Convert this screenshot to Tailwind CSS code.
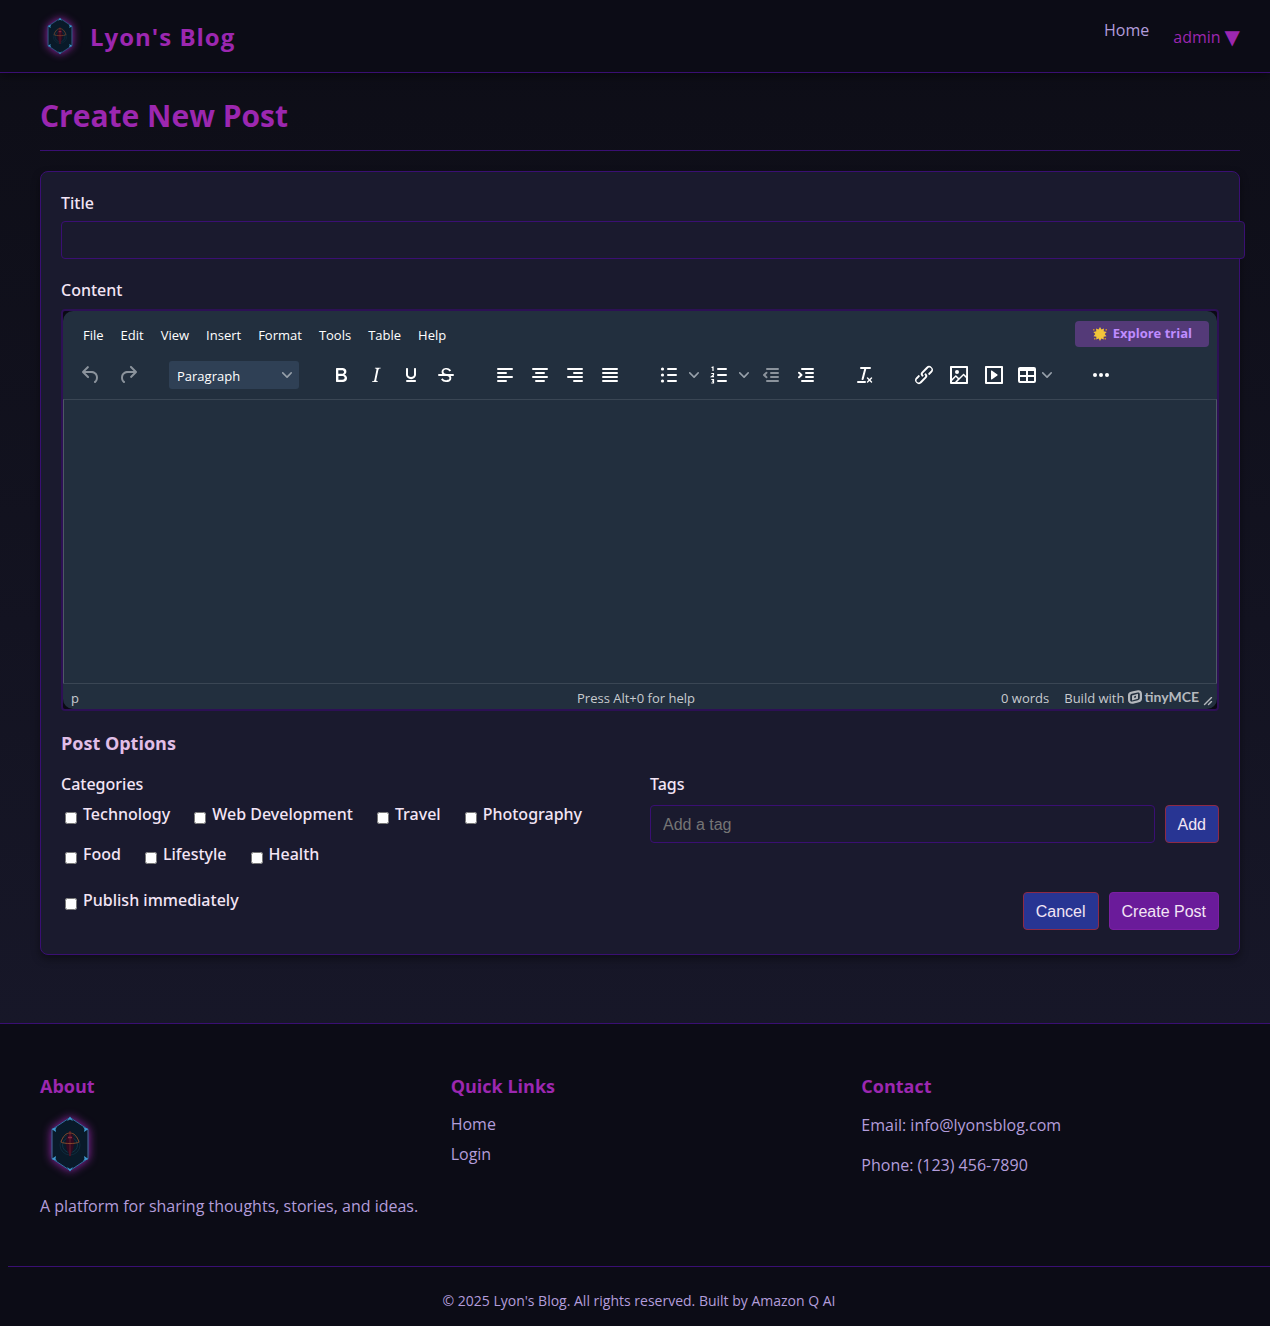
<!DOCTYPE html>
<html lang="en">
<head>
<meta charset="utf-8">
<meta name="viewport" content="width=device-width, initial-scale=1">
<title>Create New Post - Lyon's Blog</title>
<script src="https://cdn.jsdelivr.net/npm/@tailwindcss/browser@4"></script>
</head>
<body class="min-h-screen flex flex-col overflow-x-hidden bg-linear-to-b from-[#0d0d16] to-[#1a1a2e] font-['Open_Sans','Noto_Sans',sans-serif] text-base text-[#f3e5f5]">

<svg class="hidden" aria-hidden="true">
  <symbol id="crest" viewBox="0 0 60 60">
    <path d="M30 3.500 48 15.500V44.500L30 56.500 12 44.500V15.500Z" fill="#091a29" stroke="#2c6f9c" stroke-width="1"/>
    <path d="M12.500 16V44M47.500 16V44" stroke="#2a4363" stroke-width="1"/>
    <g fill="#3f97cf">
      <path d="M30 2.500 33 7 30 5.500 27 7ZM30 57.500 33 53 30 55 27 53Z"/>
      <path d="M11.500 15 17 13 15.500 15 16 18ZM48.500 15 43 13 44.500 15 44 18ZM11.500 45 16 42 15.500 45 17 47ZM48.500 45 44 42 44.500 45 43 47Z"/>
    </g>
    <g fill="none" stroke="#0f2a3c"><circle cx="30" cy="31" r="10"/><circle cx="30" cy="31" r="7.500" stroke="#123246"/></g>
    <path d="M30 17c5 5 5 16 1.500 22L30 43l-1.500-4C25 33 25 22 30 17Z" fill="#320a20"/>
    <path d="M30 17V42" stroke="#551828" stroke-width="1.500"/>
    <path d="M21 28c2-6 5-9 9-9s7 3 9 9M21 28c3 2 15 2 18 0" fill="none" stroke="#85482a" stroke-width="1"/>
    <path d="M28 23.500h4" stroke="#8a2c40" stroke-width="1.500"/>
  </symbol>
  <symbol id="chev" viewBox="0 0 10 10"><path d="M8.700 2.200c.3-.3.8-.3 1 0 .4.4.4.9 0 1.200L5.700 7.800c-.3.3-.9.3-1.200 0L.2 3.400a.8.8 0 0 1 0-1.200c.3-.3.8-.3 1.100 0L5 6l3.700-3.800Z"/></symbol>
</svg>

<header class="relative flex h-[73px] items-center justify-between border-b border-[#3a0f73] bg-[#0c0c16] pl-10 pr-[30px] shadow-[0_2px_10px_rgba(0,0,0,0.5)]">
  <a href="#" class="flex items-center gap-[10px]">
    <svg class="size-10 drop-shadow-[0_0_4px_#9c27b0]" role="img" aria-label="Crest"><use href="#crest"/></svg>
    <span class="pt-[2px] text-2xl font-bold tracking-[1px] text-[#9c27b0]">Lyon's Blog</span>
  </a>
  <nav class="flex items-start gap-6">
    <a href="#" class="leading-6 pb-3 text-[#b39ddb]">Home</a>
    <button type="button" class="flex items-center gap-1 pt-[7px] leading-6 text-[#9c27b0]">admin <span class="font-['DejaVu_Sans',sans-serif] text-xl leading-6">▼</span></button>
  </nav>
</header>

<main class="mb-[68px] pl-10 pr-[30px]">
  <h1 class="mb-5 border-b border-[#3a0f73] pt-5 pb-[11px] text-3xl leading-[46px] font-bold text-[#9c27b0]">Create New Post</h1>

  <form class="rounded-lg border border-[#3a0f73] bg-[#1a1a2e] p-5 pb-6 shadow-[0_4px_8px_rgba(0,0,0,0.4)]">
    <label for="title" class="mb-[7px] block font-['Noto_Sans',sans-serif] leading-[22px] font-medium">Title</label>
    <input id="title" type="text" class="mb-5 block box-content h-[22px] w-full rounded border border-[#3a0f73] bg-[#1a1a2e] px-3 py-[7px] font-['Liberation_Sans',Arial,sans-serif]">

    <label for="content" class="mb-2 block font-['Noto_Sans',sans-serif] leading-[22px] font-medium">Content</label>
    <div class="mb-5 rounded border-2 border-[#2d1055] bg-[#0a0a14] text-[13px]">
      <div class="overflow-hidden rounded-[10px] bg-[#222f3e] text-white">
        <div class="flex h-[47px] items-center justify-between pt-[2px] pl-5 pr-2">
          <div class="flex gap-[17px]">
            <button type="button">File</button><button type="button">Edit</button><button type="button">View</button><button type="button">Insert</button><button type="button">Format</button><button type="button">Tools</button><button type="button">Table</button><button type="button">Help</button>
          </div>
          <button type="button" class="mb-1 flex h-[26px] items-center gap-[5px] rounded bg-[#543a78] px-[17px] pt-px font-bold text-[#bf8cff]">
            <svg class="size-4" viewBox="0 0 16 16" fill="#f2c43a"><path d="m8 1 1.500 2.600L12 2.500l-.3 2.800 3 .7-2 2 1.800 2.300-2.900.4.200 2.800-2.500-1.100L8 15l-1.300-2.600-2.500 1.100.2-2.800-2.900-.4L3.300 8l-2-2 3-.7L4 2.500l2.500 1.100Z"/><path d="M1 3h1.500v1.500H1ZM13.500 3H15v1.500h-1.500ZM2 12h1.500v1.500H2ZM12.500 12H14v1.500h-1.500Z" fill="#c98f2d"/></svg>
            <span>Explore trial</span>
          </button>
        </div>

        <div class="flex h-[41px] items-start gap-6 overflow-hidden pl-[10px]">
          <div class="-mr-px flex h-[34px] items-center gap-px text-[#8b939c]">
            <button type="button" aria-label="Undo" class="flex h-7 w-9 items-center justify-center"><svg class="size-6 fill-current" viewBox="0 0 24 24"><path d="M6.400 8H12c3.700 0 6.200 2 6.800 5.100.6 2.700-.4 5.600-2.300 6.800a1 1 0 0 1-1-1.800c1.100-.6 1.800-2.700 1.400-4.600-.5-2.100-2.100-3.500-4.900-3.500H6.400l3.300 3.300a1 1 0 1 1-1.400 1.400l-5-5a1 1 0 0 1 0-1.400l5-5a1 1 0 0 1 1.400 1.400L6.400 8Z"/></svg></button>
            <button type="button" aria-label="Redo" class="flex h-7 w-9 items-center justify-center"><svg class="size-6 fill-current" viewBox="0 0 24 24"><path d="M17.600 10H12c-2.800 0-4.400 1.400-4.900 3.500-.4 2 .3 4 1.400 4.600a1 1 0 1 1-1 1.800c-2-1.200-2.900-4.100-2.300-6.800.6-3 3-5.100 6.800-5.100h5.600l-3.300-3.300a1 1 0 1 1 1.400-1.400l5 5a1 1 0 0 1 0 1.400l-5 5a1 1 0 0 1-1.400-1.400l3.300-3.300Z"/></svg></button>
          </div>
          <div class="relative flex h-[34px] w-[130px] items-center">
            <select aria-label="Block format" class="h-7 w-full appearance-none rounded-[3px] bg-[#2f4055] px-2 pt-[3px] text-white"><option>Paragraph</option></select>
            <svg class="pointer-events-none absolute right-[7px] top-3 size-[10px] fill-[#97a0aa]"><use href="#chev"/></svg>
          </div>
          <div class="flex h-[34px] items-center">
            <button type="button" aria-label="Bold" class="flex h-7 w-[35px] items-center justify-center"><svg class="size-6 fill-current" viewBox="0 0 24 24"><path d="M7.800 19c-.3 0-.5 0-.6-.2l-.2-.5V5.700c0-.2 0-.4.2-.5l.6-.2h5c1.500 0 2.700.3 3.500 1 .7.6 1.100 1.400 1.100 2.500a3 3 0 0 1-.6 1.900c-.4.6-1 1-1.600 1.200.4.1.9.3 1.300.6s.8.7 1 1.200c.4.4.5 1 .5 1.600 0 1.300-.4 2.300-1.300 3-.8.7-2.100 1-3.800 1H7.800Zm5-8.300c.6 0 1.200-.1 1.600-.5.4-.3.6-.7.6-1.300 0-1.100-.8-1.700-2.300-1.700H9.300v3.500h3.400Zm.5 6c.7 0 1.300-.1 1.700-.4.4-.4.6-.9.6-1.500s-.2-1-.7-1.400c-.4-.3-1-.4-2-.4H9.400v3.800h4Z" fill-rule="evenodd"/></svg></button>
            <button type="button" aria-label="Italic" class="flex h-7 w-[35px] items-center justify-center"><svg class="size-6 fill-current" viewBox="0 0 24 24"><path d="m16.700 4.700-.1.900h-.3c-.6 0-1 0-1.400.3-.3.3-.4.6-.5 1.100l-2.100 9.800v.6c0 .5.4.8 1.400.8h.2l-.2.8H8l.2-.8h.2c1.100 0 1.800-.5 2-1.500l2-9.800.1-.5c0-.6-.4-.8-1.400-.8h-.3l.2-.9h5.800Z"/></svg></button>
            <button type="button" aria-label="Underline" class="flex h-7 w-[35px] items-center justify-center"><svg class="size-6 fill-current" viewBox="0 0 24 24"><path d="M16 5c.6 0 1 .4 1 1v5.500a4 4 0 0 1-.4 1.800l-1 1.400a5.300 5.300 0 0 1-5.500 1 5 5 0 0 1-1.600-1c-.5-.4-.8-.9-1.100-1.400a4 4 0 0 1-.4-1.800V6c0-.6.4-1 1-1s1 .4 1 1v5.500c0 .3 0 .6.200 1l.6.7a3.300 3.300 0 0 0 2.200.8 3.400 3.400 0 0 0 2.200-.8c.3-.2.4-.5.6-.8l.2-.9V6c0-.6.4-1 1-1ZM8 17h8c.6 0 1 .4 1 1s-.4 1-1 1H8a1 1 0 0 1 0-2Z"/></svg></button>
            <button type="button" aria-label="Strikethrough" class="flex h-7 w-[35px] items-center justify-center"><svg class="size-6 fill-current" viewBox="0 0 24 24"><path d="M15.600 8.500c-.5-.7-1-1.100-1.300-1.300-.6-.4-1.300-.6-2-.6-2.700 0-2.800 1.700-2.800 2.100 0 1.600 1.800 2 3.200 2.300 4.400.9 4.600 2.800 4.600 3.900 0 1.400-.7 4.100-5 4.100A6.200 6.200 0 0 1 7 16.400l1.500-1.100c.4.6 1.600 2 3.700 2 1.600 0 2.500-.4 3-1.200.4-.8.3-2-.8-2.600-.7-.4-1.600-.7-2.900-1-1-.2-3.900-.8-3.900-3.600C7.600 6 10.300 5 12.400 5c2.900 0 4.200 1.600 4.700 2.400l-1.500 1.100Z"/><path d="M5 11h14a1 1 0 0 1 0 2H5a1 1 0 0 1 0-2Z"/></svg></button>
          </div>
          <div class="flex h-[34px] items-center">
            <button type="button" aria-label="Align left" class="flex h-7 w-[35px] items-center justify-center"><svg class="size-6 fill-none stroke-current stroke-2" stroke-linecap="round" viewBox="0 0 24 24"><path d="M5 6h14M5 10h8M5 14h14M5 18h8"/></svg></button>
            <button type="button" aria-label="Align center" class="flex h-7 w-[35px] items-center justify-center"><svg class="size-6 fill-none stroke-current stroke-2" stroke-linecap="round" viewBox="0 0 24 24"><path d="M5 6h14M8 10h8M5 14h14M8 18h8"/></svg></button>
            <button type="button" aria-label="Align right" class="flex h-7 w-[35px] items-center justify-center"><svg class="size-6 fill-none stroke-current stroke-2" stroke-linecap="round" viewBox="0 0 24 24"><path d="M5 6h14M11 10h8M5 14h14M11 18h8"/></svg></button>
            <button type="button" aria-label="Justify" class="flex h-7 w-[35px] items-center justify-center"><svg class="size-6 fill-none stroke-current stroke-2" stroke-linecap="round" viewBox="0 0 24 24"><path d="M5 6h14M5 10h14M5 14h14M5 18h14"/></svg></button>
          </div>
          <div class="flex h-[34px] items-center">
            <button type="button" aria-label="Bullet list" class="flex h-7 w-[35px] items-center justify-center"><svg class="size-6 fill-current" viewBox="0 0 24 24"><path d="M11 6h8M11 12h8M11 18h8" fill="none" stroke="currentColor" stroke-width="2" stroke-linecap="round"/><circle cx="5.500" cy="6" r="1.600"/><circle cx="5.500" cy="12" r="1.600"/><circle cx="5.500" cy="18" r="1.600"/></svg></button>
            <button type="button" aria-label="Bullet styles" class="flex h-7 w-[15px] items-center justify-center"><svg class="size-[10px] fill-[#97a0aa]"><use href="#chev"/></svg></button>
            <button type="button" aria-label="Numbered list" class="flex h-7 w-[35px] items-center justify-center"><svg class="size-6 fill-none stroke-current" viewBox="0 0 24 24"><path d="M11 6h8M11 12h8M11 18h8" stroke-width="2" stroke-linecap="round"/><path d="M4.500 4.500 6 4v4M4.300 10.500h2.200V12L4.500 13.700H7M4.300 16.500h2.200V20H4.300M5 18.200h1.500" stroke-width="1.200"/></svg></button>
            <button type="button" aria-label="Number styles" class="flex h-7 w-[15px] items-center justify-center"><svg class="size-[10px] fill-[#97a0aa]"><use href="#chev"/></svg></button>
            <button type="button" aria-label="Decrease indent" class="ml-[2px] flex h-7 w-[35px] items-center justify-center text-[#8b939c]"><svg class="size-6 fill-none stroke-current stroke-2" stroke-linecap="round" stroke-linejoin="round" viewBox="0 0 24 24"><path d="M8 6h11M12 10h7M12 14h7M8 18h11M7.500 9.700 5 12l2.500 2.300"/></svg></button>
            <button type="button" aria-label="Increase indent" class="flex h-7 w-[35px] items-center justify-center"><svg class="size-6 fill-none stroke-current stroke-2" stroke-linecap="round" stroke-linejoin="round" viewBox="0 0 24 24"><path d="M8 6h11M12 10h7M12 14h7M8 18h11M5 9.700 7.500 12 5 14.300"/></svg></button>
          </div>
          <div class="flex h-[34px] items-center">
            <button type="button" aria-label="Clear formatting" class="flex h-7 w-[35px] items-center justify-center"><svg class="size-6 fill-current" viewBox="0 0 24 24"><path d="M13.200 6a1 1 0 0 1 0 .2l-2.600 10a1 1 0 0 1-1 .8h-.2a.8.8 0 0 1-.8-1l2.600-10H8a1 1 0 1 1 0-2h9a1 1 0 0 1 0 2h-3.800ZM5 18h7a1 1 0 0 1 0 2H5a1 1 0 0 1 0-2Zm13 1.500L16.500 18 15 19.500a.7.7 0 0 1-1-1l1.500-1.500-1.500-1.500a.7.7 0 0 1 1-1l1.500 1.500 1.500-1.500a.7.7 0 0 1 1 1L17.500 17l1.500 1.500a.7.7 0 0 1-1 1Z"/></svg></button>
          </div>
          <div class="flex h-[34px] items-center">
            <button type="button" aria-label="Link" class="flex h-7 w-[35px] items-center justify-center"><svg class="size-6 fill-current" viewBox="0 0 24 24"><path d="M6.200 12.300a1 1 0 0 1 1.400 1.400l-2 2a2 2 0 1 0 2.600 2.800l4.800-4.800a1 1 0 0 0 0-1.400 1 1 0 1 1 1.400-1.300 2.900 2.900 0 0 1 0 4L9.600 20a3.900 3.900 0 0 1-5.500-5.500l2-2Zm11.600-.6a1 1 0 0 1-1.400-1.400l2-2a2 2 0 1 0-2.600-2.800L11 10.300a1 1 0 0 0 0 1.400A1 1 0 1 1 9.600 13a2.900 2.900 0 0 1 0-4L14.400 4a3.900 3.900 0 0 1 5.500 5.500l-2 2Z"/></svg></button>
            <button type="button" aria-label="Image" class="flex h-7 w-[35px] items-center justify-center"><svg class="size-6 fill-current" viewBox="0 0 24 24"><path fill-rule="evenodd" d="m5 15.700 3.300-3.200c.3-.3.7-.3 1 0L12 15l4.100-4c.3-.4.8-.4 1 0l2 1.900V5H5v10.700ZM5 18V19h3l2.800-2.900-2-2L5 17.900Zm14-3-2.500-2.400-6.400 6.500H19v-4ZM4 3h16c.6 0 1 .4 1 1v16c0 .6-.4 1-1 1H4a1 1 0 0 1-1-1V4c0-.6.4-1 1-1Z"/><circle cx="10" cy="9" r="2"/></svg></button>
            <button type="button" aria-label="Media" class="flex h-7 w-[35px] items-center justify-center"><svg class="size-6 fill-current" viewBox="0 0 24 24"><path fill-rule="evenodd" d="M4 3h16c.6 0 1 .4 1 1v16c0 .6-.4 1-1 1H4a1 1 0 0 1-1-1V4c0-.6.4-1 1-1Zm1 2v14h14V5H5Zm4.800 2.600 5.600 4a.5.5 0 0 1 0 .8l-5.600 4A.5.5 0 0 1 9 16V8a.5.5 0 0 1 .8-.4Z"/></svg></button>
            <button type="button" aria-label="Table" class="flex h-7 w-12 items-center gap-[3px] pl-1"><svg class="size-6 fill-current" viewBox="0 0 24 24"><path fill-rule="evenodd" d="M19 4a2 2 0 0 1 2 2v12a2 2 0 0 1-2 2H5a2 2 0 0 1-2-2V6c0-1.100.9-2 2-2h14ZM5 14v4h6v-4H5Zm14 0h-6v4h6v-4Zm0-6h-6v4h6V8ZM5 12h6V8H5v4Z"/></svg><svg class="size-[10px] fill-[#97a0aa]"><use href="#chev"/></svg></button>
          </div>
          <div class="flex h-[34px] items-center">
            <button type="button" aria-label="More" class="flex h-7 w-[35px] items-center justify-center"><svg class="size-6 fill-current" viewBox="0 0 24 24"><circle cx="6" cy="12" r="2"/><circle cx="12" cy="12" r="2"/><circle cx="18" cy="12" r="2"/></svg></button>
          </div>
        </div>

        <textarea id="content" class="block h-[284px] w-full resize-none border border-b-0 border-[#4d5864] border-t-[#3a4654] bg-[#222f3e] p-4 text-base text-white"></textarea>

        <div class="grid h-[26px] grid-cols-3 items-center border-t border-[#3a4654] pt-1 pl-2 pr-1 text-[#c8cbcf]">
          <span>p</span>
          <span class="pr-3 text-center">Press Alt+0 for help</span>
          <div class="flex items-center justify-end">
            <span class="mr-[15px]">0 words</span>
            <a href="#" class="flex items-center gap-1">Build with
              <span class="flex items-center gap-[2px] pb-1 font-['Lato',sans-serif] text-sm leading-4 font-bold text-[#b4b8bd]">
                <svg class="size-[14px]" viewBox="0 0 14 14"><path fill="#b4b8bd" fill-rule="evenodd" d="M5 1.200 10 .3C12.300 0 14 1.500 14 4v4.500c0 2-1 3.300-3 3.800l-6 1.400C2.200 14 0 12.500 0 10V5.500c0-2 1-3.200 3-3.700ZM5 3.600C3 4 2.200 4.600 2.200 6.200V10c0 1.300.9 2 2.300 1.600L9 10.500c2-.4 2.800-1.200 2.800-2.700V4c0-1.200-.8-1.800-2.200-1.500Z"/><path fill="#b4b8bd" d="M4 5.500 10 3.800v5L4 10.400Z"/><path fill="#222f3e" d="m6.200 6.300 1.800-.5v1.800l-1.800.5Z"/></svg>
                tinyMCE</span></a>
            <svg class="ml-1 mt-1 size-[10px] fill-[#b4b8bd]" viewBox="0 0 10 10"><path d="M8.100 1.100A.5.500 0 1 1 9 2L2 9A.5.500 0 1 1 1 8l7-7ZM8.100 5.100A.5.500 0 1 1 9 6L6 9A.5.500 0 1 1 5 8l3-3Z"/></svg>
          </div>
        </div>
      </div>
    </div>

    <h2 class="mb-[18px] text-lg leading-6 font-bold text-[#e1bee7]">Post Options</h2>

    <div class="grid grid-cols-2 gap-5">
      <fieldset class="font-['Noto_Sans',sans-serif] font-medium">
        <legend class="mb-[7px] leading-[22px]">Categories</legend>
        <div class="flex flex-wrap gap-x-6 gap-y-4 pl-1">
          <label class="flex gap-[6px]"><input type="checkbox" class="mt-[10px] size-3">Technology</label>
          <label class="flex gap-[6px]"><input type="checkbox" class="mt-[10px] size-3">Web Development</label>
          <label class="flex gap-[6px]"><input type="checkbox" class="mt-[10px] size-3">Travel</label>
          <label class="flex gap-[6px]"><input type="checkbox" class="mt-[10px] size-3">Photography</label>
          <label class="flex gap-[6px]"><input type="checkbox" class="mt-[10px] size-3">Food</label>
          <label class="flex gap-[6px]"><input type="checkbox" class="mt-[10px] size-3">Lifestyle</label>
          <label class="flex gap-[6px]"><input type="checkbox" class="mt-[10px] size-3">Health</label>
        </div>
      </fieldset>
      <div>
        <label for="tag" class="mb-[10px] block font-['Noto_Sans',sans-serif] leading-[22px] font-medium">Tags</label>
        <div class="flex gap-[10px] font-['Liberation_Sans',Arial,sans-serif]">
          <input id="tag" type="text" placeholder="Add a tag" class="h-[38px] min-w-0 flex-1 rounded border border-[#3a0f73] bg-[#1a1a2e] px-3 pt-px placeholder:text-[#757575]">
          <button type="button" class="h-[38px] rounded border border-[#8e2a45] bg-[#283593] px-3 pt-px">Add</button>
        </div>
      </div>
    </div>

    <div class="mt-[22px] flex items-start justify-between">
      <label class="flex gap-[6px] pl-1 font-['Noto_Sans',sans-serif] font-medium"><input type="checkbox" class="mt-[10px] size-3">Publish immediately</label>
      <div class="mt-1 flex gap-[10px] font-['Liberation_Sans',Arial,sans-serif]">
        <button type="button" class="h-[38px] rounded border border-[#8e2a45] bg-[#283593] px-3 pt-px">Cancel</button>
        <button type="submit" class="h-[38px] rounded border border-[#7b1fa2] bg-[#6a1b9a] px-3 pt-px">Create Post</button>
      </div>
    </div>
  </form>
</main>

<footer class="flex-1 border-t border-[#3a0f73] bg-[#0c0c16] text-[#b39ddb]">
  <div class="grid grid-cols-3 gap-8 pt-[50px] pb-12 pl-10 pr-[30px]">
    <section>
      <h3 class="mb-4 text-lg leading-6 font-bold text-[#9c27b0]">About</h3>
      <svg class="mb-5 size-[60px] drop-shadow-[0_0_5px_#9c27b0]" role="img" aria-label="Crest"><use href="#crest"/></svg>
      <p>A platform for sharing thoughts, stories, and ideas.</p>
    </section>
    <section>
      <h3 class="mb-[14px] text-lg leading-6 font-bold text-[#9c27b0]">Quick Links</h3>
      <ul class="flex flex-col gap-[6px]">
        <li><a href="#">Home</a></li>
        <li><a href="#">Login</a></li>
      </ul>
    </section>
    <section>
      <h3 class="mb-[15px] text-lg leading-6 font-bold text-[#9c27b0]">Contact</h3>
      <p class="mb-4">Email: info@lyonsblog.com</p>
      <p>Phone: (123) 456-7890</p>
    </section>
  </div>
  <p class="ml-2 border-t border-[#3a0f73] pt-6 pb-[15px] text-center text-sm">© 2025 Lyon's Blog. All rights reserved. Built by Amazon Q AI</p>
</footer>
</body>
</html>
